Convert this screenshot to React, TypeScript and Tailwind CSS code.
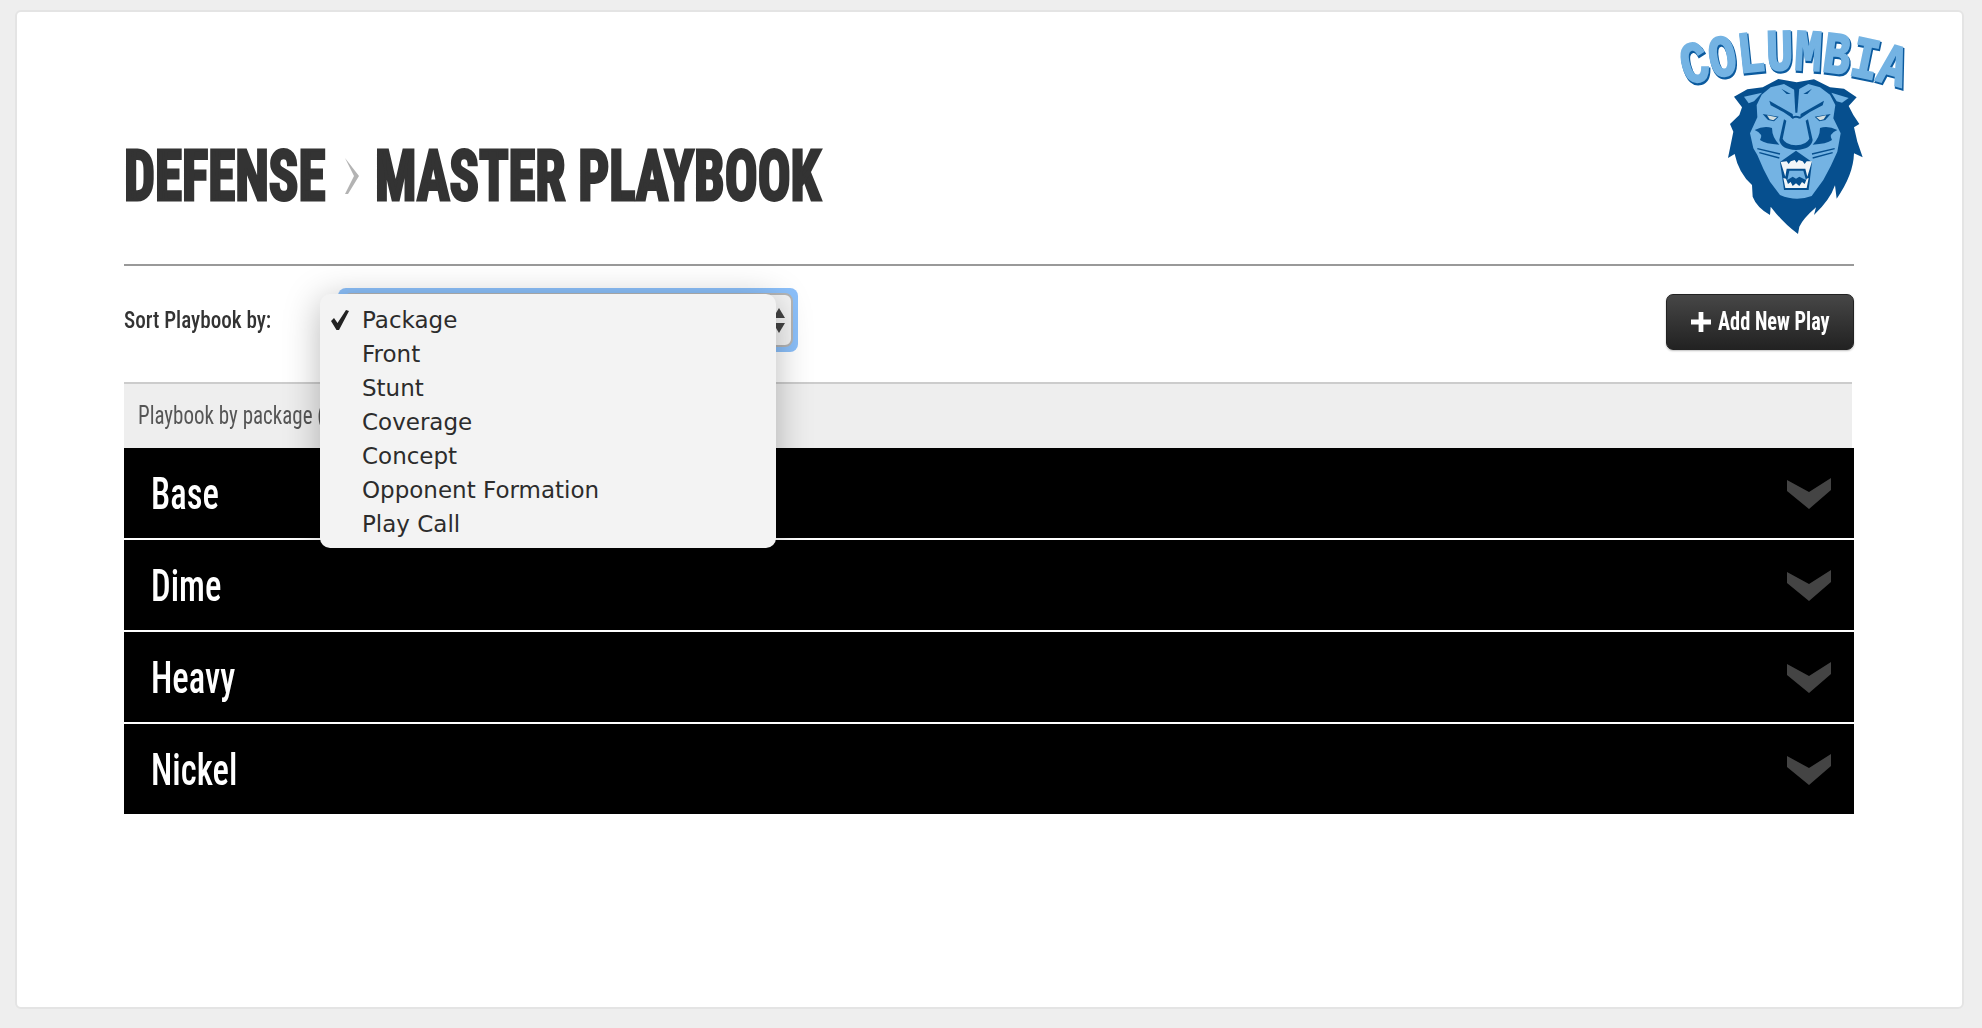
const OPTIONS = ["Package", "Front", "Stunt", "Coverage", "Concept", "Opponent Formation", "Play Call"];
const GROUPS = ["Base", "Dime", "Heavy", "Nickel"];

const MANE =
  "M415 237 L470 247 L522 238 L570 262 L612 266 L650 292 L626 318 L640 345 L658 372 L642 382 L652 425 L668 472 L642 460 Q640 525 590 596 L585 556 Q570 600 522 645 L528 622 Q490 655 478 680 L474 702 Q430 670 392 620 L390 645 Q350 622 338 590 L336 555 Q296 520 284 462 L264 474 L280 395 L270 372 L298 345 L306 322 L282 290 L322 268 L368 262 Z";
const FACE =
  "M468 272 L432 252 L392 262 L365 284 L350 315 L352 352 L330 400 L340 445 L352 465 Q370 510 390 545 L420 585 Q468 606 515 588 L550 540 Q575 495 592 455 L602 400 L580 355 L586 315 L570 284 L540 262 L505 252 Z";

function Logo() {
  return (
    <svg viewBox="120 75 690 630" className="block h-[210px] w-[230px] overflow-visible blur-[0.5px]">
      <defs>
        <path id="arc" d="M138 256 Q460 158 794 266" />
      </defs>
      {/* arched wordmark */}
      <text fontFamily="'Liberation Mono', monospace" fontWeight="700" fontSize="176" fill="#0b5a9e" stroke="#0b5a9e" strokeWidth="9" transform="translate(3 5)">
        <textPath href="#arc" textLength="656" lengthAdjust="spacingAndGlyphs">COLUMBIA</textPath>
      </text>
      <text fontFamily="'Liberation Mono', monospace" fontWeight="700" fontSize="176" fill="#74b3e3" stroke="#74b3e3" strokeWidth="6">
        <textPath href="#arc" textLength="656" lengthAdjust="spacingAndGlyphs">COLUMBIA</textPath>
      </text>
      {/* lion */}
      <path d={MANE} fill="#064f8e" />
      <path d={FACE} fill="#74b3e3" />
      <path d="M312 290 L366 278 L342 304 L326 310 Z" fill="#74b3e3" />
      <path d="M574 278 L626 294 L606 308 L590 304 Z" fill="#74b3e3" />
      <path d="M462 262 L478 262 L472 338 L466 338 Z" fill="#064f8e" />
      <path d="M424 266 L452 282 L440 282 Z M516 266 L490 282 L502 282 Z" fill="#064f8e" />
      <path d="M388 302 L458 342 L460 356 L430 336 L392 316 Z" fill="#064f8e" />
      <path d="M552 302 L482 342 L480 356 L510 336 L548 316 Z" fill="#064f8e" />
      <path d="M368 342 L416 350 L402 364 L384 360 Z" fill="#064f8e" />
      <path d="M572 342 L524 350 L538 364 L556 360 Z" fill="#064f8e" />
      <path d="M381 346 L411 352 L400 361 L389 358 Z" fill="#d3dfe0" />
      <path d="M559 346 L529 352 L540 361 L551 358 Z" fill="#d3dfe0" />
      <path d="M452 352 Q468 342 484 352 L478 356 Q468 350 458 356 Z" fill="#064f8e" />
      <path d="M432 358 L418 420 Q422 448 468 450 Q514 448 518 420 L504 358 L497 362 L508 416 Q500 434 468 436 Q436 434 428 416 L439 362 Z" fill="#064f8e" />
      <path d="M344 390 Q372 376 396 384 Q396 412 418 434 Q376 432 360 420 Q372 402 344 390 Z" fill="#064f8e" />
      <path d="M592 390 Q564 376 540 384 Q540 412 518 434 Q560 432 576 420 Q564 402 592 390 Z" fill="#064f8e" />
      <path d="M352 446 L420 462 M358 458 L418 474 M584 446 L516 462 M578 458 L518 474" stroke="#064f8e" strokeWidth="4" fill="none" />
      <path d="M420 486 L468 452 L516 486 L506 570 L432 570 Z" fill="#064f8e" />
      <path d="M422 486 L440 484 L446 492 L452 484 L464 480 L470 488 L476 480 L488 484 L494 492 L500 484 L516 484 L502 530 L496 506 L440 506 L436 530 Z" fill="#f2f6f8" />
      <path d="M448 512 L490 512 L498 540 L478 530 L468 536 L458 530 L442 540 Z" fill="#74b3e3" />
      <path d="M430 534 L438 536 L444 552 L452 546 L458 558 L468 550 L478 558 L486 546 L494 552 L500 536 L506 534 L500 564 L436 564 Z" fill="#f2f6f8" />
    </svg>
  );
}

function SelectBox() {
  return (
    <div className="relative ml-[68px] mt-[1px] h-[64px] w-[460px] rounded-[8px] bg-[#8cc0fa] p-[5px]">
      <div className="flex h-full justify-end rounded-[8px] border-2 border-[#b5b5b5] bg-[#f4f4f4] pr-[6px]">
        <div className="flex flex-col justify-center gap-[5px]">
          <div className="h-0 w-0 border-x-[6px] border-b-[10px] border-x-transparent border-b-[#444]" />
          <div className="h-0 w-0 border-x-[6px] border-t-[10px] border-x-transparent border-t-[#444]" />
        </div>
      </div>
      {/* open native menu */}
      <div className="absolute left-[-18px] top-[6px] z-10 h-[254px] w-[456px] rounded-[10px] bg-[#f3f3f3] pt-[9px] font-['DejaVu_Sans',sans-serif] text-[23px] text-[#2c2c2c] shadow-[0_6px_36px_rgba(0,0,0,0.28)]">
        {OPTIONS.map((o, i) => (
          <div key={o} className="flex h-[34px] items-center">
            <div className="flex w-[42px] pl-[11px]">
              {i === 0 && (
                <svg viewBox="0 0 18 20" className="h-[20px] w-[18px]">
                  <path d="M0 11 L3 8 L6.5 13 L15 0 L18 1 L8 20 L5.5 20 Z" fill="#222" />
                </svg>
              )}
            </div>
            <span>{o}</span>
          </div>
        ))}
      </div>
    </div>
  );
}

export default function App() {
  return (
    <div className="h-[1028px] bg-[#eeeeee] pl-[15px] pr-[18px] pt-[10px]">
      <div className="h-[999px] rounded-[6px] border-2 border-[#e4e4e4] bg-white pl-[107px] pr-[108px] font-['Roboto_Condensed',sans-serif]">
        <header className="flex h-[252px] items-start justify-between">
          <h1 className="mt-[124px] flex h-[80px] items-center text-[70px] font-bold text-[#333] [-webkit-text-stroke:3px_#333]">
            <span className="w-[220px] origin-left scale-x-[0.785]">DEFENSE</span>
            <svg viewBox="0 0 16 36" className="h-[36px] w-[16px]">
              <path d="M1 0 L15 18 L4 36 L1 36 L10 18 L1 0 Z" fill="#b3b3b3" />
            </svg>
            <span className="ml-[15px] origin-left scale-x-[0.78] whitespace-nowrap">MASTER PLAYBOOK</span>
          </h1>
          <div className="mr-[-56px] mt-[13px]">
            <Logo />
          </div>
        </header>
        <div className="h-[2px] bg-[#999]" />

        <div className="flex h-[116px] items-start pt-[21px]">
          <label className="flex h-[65px] w-[146px] origin-left scale-x-[0.88] items-center whitespace-nowrap text-[24px] font-medium text-[#333]">Sort Playbook by:</label>
          <SelectBox />
          <button className="ml-auto mt-[7px] flex h-[56px] w-[188px] items-center rounded-[7px] border border-[#222] bg-gradient-to-b from-[#474747] to-[#222] pl-[24px] text-white shadow-[0_1px_2px_rgba(0,0,0,0.25)]">
            <svg viewBox="0 0 21 21" className="h-[20px] w-[20px] shrink-0">
              <path d="M8 0h5v8h8v5h-8v8H8v-8H0V8h8z" fill="#fff" />
            </svg>
            <span className="mb-[2px] ml-[7px] origin-left scale-x-[0.78] whitespace-nowrap text-[26px] font-bold">Add New Play</span>
          </button>
        </div>

        <div className="mr-[2px] flex h-[66px] items-center border-t-2 border-[#cccccc] bg-[#eeeeee] pl-[14px] text-[#555]">
          <span className="origin-left scale-x-[0.84] whitespace-nowrap text-[25px]">Playbook by package (4)</span>
        </div>

        <div className="flex flex-col gap-[2px]">
          {GROUPS.map((g) => (
            <div key={g} className="flex h-[90px] items-center justify-between bg-black pl-[27px] pr-[23px]">
              <span className="origin-left scale-x-[0.77] pt-[1px] text-[45px] font-medium leading-none text-white">{g}</span>
              <svg viewBox="0 0 44 31" className="mt-[1px] h-[31px] w-[44px] blur-[0.5px]">
                <path d="M0 2 L22 14 L44 0 L44 12 L22 31 L0 13 Z" fill="#444" />
              </svg>
            </div>
          ))}
        </div>
      </div>
    </div>
  );
}
